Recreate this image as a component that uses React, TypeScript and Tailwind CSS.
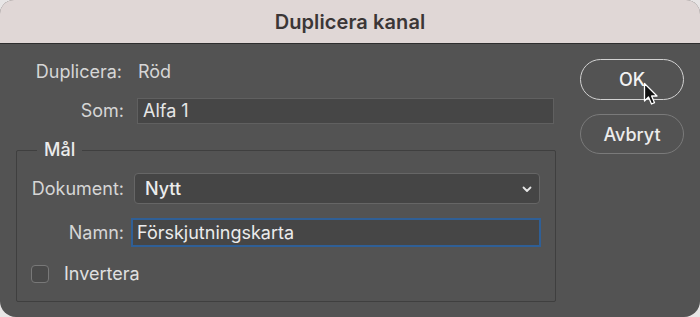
import React from "react";

export default function App() {
  return (
    <div className="w-[700px] h-[317px] bg-[#e8e6e6] overflow-hidden" style={{ fontFamily: "Inter, 'Noto Sans', sans-serif" }}>
      <div className="w-[700px] h-[317px] rounded-t-[14px] rounded-b-[16px] overflow-hidden flex flex-col bg-[#535353]">
        <div className="h-[44px] shrink-0 bg-[#e0d7d6] border-b border-[#2e2e2e] flex items-center justify-center">
          <span className="text-[20px] font-semibold text-[#3b3636] tracking-[0.1px]">Duplicera kanal</span>
        </div>
        <div className="flex flex-1 text-[18px] text-[#d6d6d6]">
          <div className="flex flex-col w-[570px] pl-[16px] pt-[16px]">
            <div className="flex items-center h-[22px]">
              <span className="w-[106px] text-right shrink-0">Duplicera:</span>
              <span className="ml-[16px]">Röd</span>
            </div>
            <div className="flex items-center mt-[15px]">
              <span className="w-[108px] text-right shrink-0">Som:</span>
              <div className="ml-[13px] w-[417px] h-[26px] bg-[#464646] border border-[#606060] flex items-center px-[5px] text-[#e6e6e6]">Alfa 1</div>
            </div>
            <div className="relative mt-[26px] w-[540px] h-[152px] border border-[#3f3f3f] rounded-[2px]">
              <span className="absolute left-[20px] top-[-15px] px-[7px] bg-[#535353] text-[#ececec] font-medium">Mål</span>
              <div className="flex flex-col pt-[22px] pl-[13px]">
                <div className="flex items-center">
                  <span className="w-[94px] text-right shrink-0">Dokument:</span>
                  <div className="ml-[10px] w-[406px] h-[31px] bg-[#454545] border border-[#666666] rounded-[4px] flex items-center justify-between pl-[10px] pr-[6px] text-[#ececec] font-medium">
                    <span>Nytt</span>
                    <svg width="12" height="12" viewBox="0 0 12 12"><path d="M2.5 4.5 L6 8 L9.5 4.5" stroke="#e6e6e6" strokeWidth="1.8" fill="none" strokeLinecap="round" strokeLinejoin="round" /></svg>
                  </div>
                </div>
                <div className="flex items-center mt-[14px]">
                  <span className="w-[94px] text-right shrink-0">Namn:</span>
                  <div className="ml-[7px] w-[410px] h-[29px] bg-[#464646] border-2 border-[#2f5f96] flex items-center px-[4px] text-[#ececec]">Förskjutningskarta</div>
                </div>
                <div className="flex items-center mt-[13px] ml-[1px]">
                  <div className="w-[18px] h-[18px] rounded-[4px] border border-[#787878] bg-[#4a4a4a]"></div>
                  <span className="ml-[15px] text-[#e0e0e0]">Invertera</span>
                </div>
              </div>
            </div>
          </div>
          <div className="flex flex-col pt-[15px] pl-[10px]">
            <div className="relative w-[104px] h-[41px] rounded-full border-[1.5px] border-[#d2d2d2] flex items-center justify-center text-[#f2f2f2] font-medium text-[18px]">
              OK
              <svg className="absolute left-[62px] top-[22px]" width="18" height="26" viewBox="0 0 18 26">
                <path d="M1.5 1.5 L1.5 19 L5.5 15 L8.5 22 L11.5 20.7 L8.6 14 L14 14 Z" fill="#111" stroke="#fff" strokeWidth="1.3" strokeLinejoin="round" />
              </svg>
            </div>
            <div className="mt-[14px] w-[104px] h-[40px] rounded-full border-[1.5px] border-[#7a7a7a] flex items-center justify-center text-[#ececec] font-medium">
              Avbryt
            </div>
          </div>
        </div>
      </div>
    </div>
  );
}
